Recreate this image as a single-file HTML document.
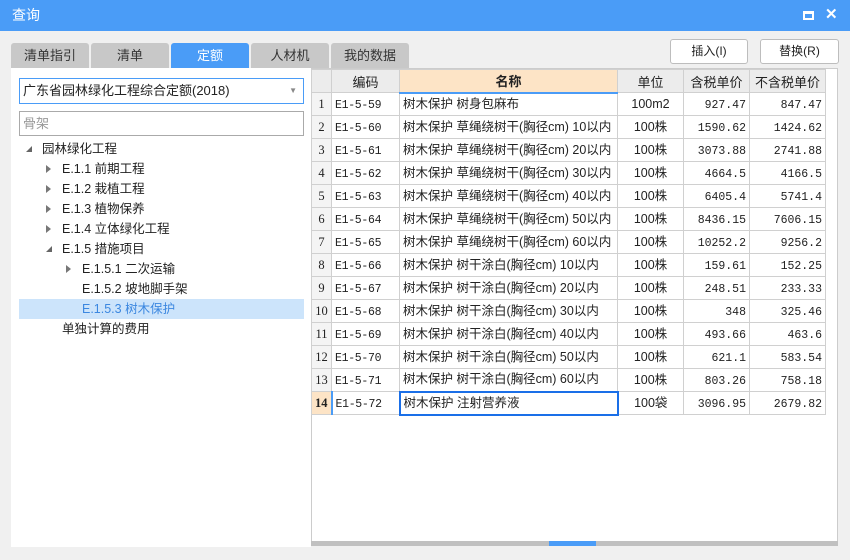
<!DOCTYPE html><html><head><meta charset="utf-8"><style>
*{box-sizing:border-box;margin:0;padding:0}
body{width:850px;height:560px;background:#f0f0f0;font-family:"Liberation Sans","Microsoft YaHei","Noto Sans CJK SC",sans-serif;font-size:13px;color:#222;position:relative;overflow:hidden}
.abs{position:absolute}
.title{left:0;top:0;width:850px;height:31px;background:#4a9cf7;color:#fff;font-size:14px;line-height:31px;padding-left:12px}
.tab{top:43px;height:26px;width:78px;background:#c8c8c8;border-radius:3px 3px 0 0;text-align:center;line-height:26px;font-size:13px;color:#333}
.btn{top:39px;height:25px;background:#fff;border:1px solid #bdbdbd;border-radius:3px;text-align:center;line-height:23px;font-size:12px}
.left{left:11px;top:68px;width:300px;height:479px;background:#fff}
.tr{position:absolute;height:20px;line-height:20px;font-size:12.5px;white-space:nowrap}
.arr{position:absolute;width:0;height:0;border-top:4px solid transparent;border-bottom:4px solid transparent;border-left:5px solid #777;top:6px}
.dn{position:absolute;width:0;height:0;border-left:6px solid transparent;border-bottom:6px solid #666;top:7px}
table{border-collapse:collapse;position:absolute;left:311px;top:69px;font-size:12.5px;table-layout:fixed}
td{border:1px solid #d0d0d0;height:23px;line-height:21px;vertical-align:middle;padding:0 3px;white-space:nowrap;overflow:hidden;background:#fff}
th{border:1px solid #d0d0d0;height:23px;font-weight:normal;background:#ececec;font-size:13px}
.n{text-align:center;background:#f4f4f4;font-family:"Liberation Serif",serif;padding:0}
.c{font-family:"Liberation Mono",monospace;font-size:11.5px;letter-spacing:-.3px;padding-top:3px;line-height:18px}
.r{text-align:right;font-family:"Liberation Mono",monospace;font-size:11.5px;padding-top:3px;line-height:18px}
.u{text-align:center}
</style></head><body>
<div class="abs title">查询</div>
<div class="abs" style="left:803px;top:11px;width:11px;height:9px;border:2px solid #fff;border-top-width:3px"></div>
<div class="abs" style="left:825px;top:6px;color:#fff;font-size:15px;font-weight:bold;line-height:18px">✕</div>
<div class="abs tab" style="left:11px">清单指引</div>
<div class="abs tab" style="left:91px">清单</div>
<div class="abs tab" style="left:171px;background:#4a9cf7;color:#fff">定额</div>
<div class="abs tab" style="left:251px">人材机</div>
<div class="abs tab" style="left:331px">我的数据</div>
<div class="abs btn" style="left:670px;width:78px">插入(I)</div>
<div class="abs btn" style="left:760px;width:79px">替换(R)</div>
<div class="abs left"></div>
<div class="abs" style="left:19px;top:78px;width:285px;height:26px;border:1px solid #4a9cf7;background:#fff;line-height:24px;padding-left:3px;font-size:13px">广东省园林绿化工程综合定额(2018)<span style="position:absolute;right:6px;top:0;color:#888;font-size:8px">▼</span></div>
<div class="abs" style="left:19px;top:111px;width:285px;height:25px;border:1px solid #aaa;background:#fff;line-height:23px;padding-left:3px;color:#999">骨架</div>
<div class="abs" style="left:19px;top:299px;width:285px;height:20px;background:#cce4fb"></div>
<div class="tr" style="left:26px;top:139px"><span class="dn" style="left:0"></span><span style="margin-left:16px">园林绿化工程</span></div>
<div class="tr" style="left:46px;top:159px"><span class="arr"></span><span style="margin-left:16px">E.1.1 前期工程</span></div>
<div class="tr" style="left:46px;top:179px"><span class="arr"></span><span style="margin-left:16px">E.1.2 栽植工程</span></div>
<div class="tr" style="left:46px;top:199px"><span class="arr"></span><span style="margin-left:16px">E.1.3 植物保养</span></div>
<div class="tr" style="left:46px;top:219px"><span class="arr"></span><span style="margin-left:16px">E.1.4 立体绿化工程</span></div>
<div class="tr" style="left:46px;top:239px"><span class="dn" style="left:0"></span><span style="margin-left:16px">E.1.5 措施项目</span></div>
<div class="tr" style="left:66px;top:259px"><span class="arr"></span><span style="margin-left:16px">E.1.5.1 二次运输</span></div>
<div class="tr" style="left:82px;top:279px">E.1.5.2 坡地脚手架</div>
<div class="tr" style="left:82px;top:299px;color:#3b87e0">E.1.5.3 树木保护</div>
<div class="tr" style="left:62px;top:319px">单独计算的费用</div>
<div class="abs" style="left:311px;top:68px;width:527px;height:478px;background:#fff;border:1px solid #ccc"></div>
<table>
<colgroup><col style="width:20px"><col style="width:68px"><col style="width:218px"><col style="width:66px"><col style="width:66px"><col style="width:76px"></colgroup>
<tr><th></th><th>编码</th><th style="background:#fde4c6;font-weight:bold;border-bottom:2px solid #4a9cf7">名称</th><th>单位</th><th>含税单价</th><th>不含税单价</th></tr>
<tr><td class="n">1</td><td class="c">E1-5-59</td><td>树木保护 树身包麻布</td><td class="u">100m2</td><td class="r">927.47</td><td class="r">847.47</td></tr>
<tr><td class="n">2</td><td class="c">E1-5-60</td><td>树木保护 草绳绕树干(胸径cm) 10以内</td><td class="u">100株</td><td class="r">1590.62</td><td class="r">1424.62</td></tr>
<tr><td class="n">3</td><td class="c">E1-5-61</td><td>树木保护 草绳绕树干(胸径cm) 20以内</td><td class="u">100株</td><td class="r">3073.88</td><td class="r">2741.88</td></tr>
<tr><td class="n">4</td><td class="c">E1-5-62</td><td>树木保护 草绳绕树干(胸径cm) 30以内</td><td class="u">100株</td><td class="r">4664.5</td><td class="r">4166.5</td></tr>
<tr><td class="n">5</td><td class="c">E1-5-63</td><td>树木保护 草绳绕树干(胸径cm) 40以内</td><td class="u">100株</td><td class="r">6405.4</td><td class="r">5741.4</td></tr>
<tr><td class="n">6</td><td class="c">E1-5-64</td><td>树木保护 草绳绕树干(胸径cm) 50以内</td><td class="u">100株</td><td class="r">8436.15</td><td class="r">7606.15</td></tr>
<tr><td class="n">7</td><td class="c">E1-5-65</td><td>树木保护 草绳绕树干(胸径cm) 60以内</td><td class="u">100株</td><td class="r">10252.2</td><td class="r">9256.2</td></tr>
<tr><td class="n">8</td><td class="c">E1-5-66</td><td>树木保护 树干涂白(胸径cm) 10以内</td><td class="u">100株</td><td class="r">159.61</td><td class="r">152.25</td></tr>
<tr><td class="n">9</td><td class="c">E1-5-67</td><td>树木保护 树干涂白(胸径cm) 20以内</td><td class="u">100株</td><td class="r">248.51</td><td class="r">233.33</td></tr>
<tr><td class="n">10</td><td class="c">E1-5-68</td><td>树木保护 树干涂白(胸径cm) 30以内</td><td class="u">100株</td><td class="r">348</td><td class="r">325.46</td></tr>
<tr><td class="n">11</td><td class="c">E1-5-69</td><td>树木保护 树干涂白(胸径cm) 40以内</td><td class="u">100株</td><td class="r">493.66</td><td class="r">463.6</td></tr>
<tr><td class="n">12</td><td class="c">E1-5-70</td><td>树木保护 树干涂白(胸径cm) 50以内</td><td class="u">100株</td><td class="r">621.1</td><td class="r">583.54</td></tr>
<tr><td class="n">13</td><td class="c">E1-5-71</td><td>树木保护 树干涂白(胸径cm) 60以内</td><td class="u">100株</td><td class="r">803.26</td><td class="r">758.18</td></tr>
<tr><td class="n" style="background:#fde4c6;font-weight:bold;border-right:2px solid #4a9cf7">14</td><td class="c">E1-5-72</td><td style="border:2px solid #1a6fe8">树木保护 注射营养液</td><td class="u">100袋</td><td class="r">3096.95</td><td class="r">2679.82</td></tr>
</table>
<div class="abs" style="left:311px;top:541px;width:527px;height:5px;background:#c0c0c0"></div>
<div class="abs" style="left:549px;top:541px;width:47px;height:5px;background:#4a9cf7"></div>
</body></html>
